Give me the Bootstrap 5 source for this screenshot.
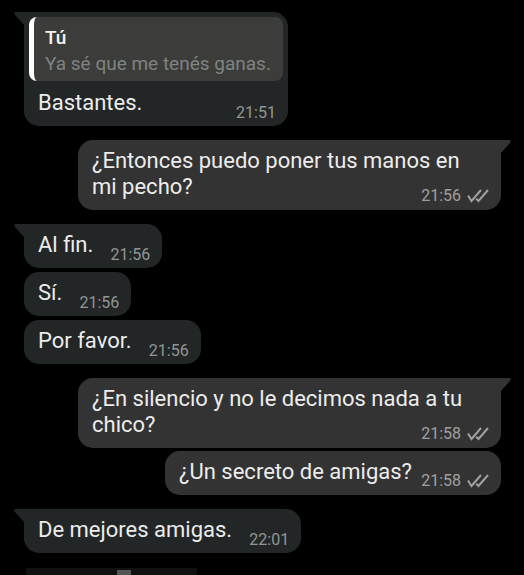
<!DOCTYPE html>
<html lang="es">
<head>
<meta charset="utf-8">
<meta name="viewport" content="width=device-width, initial-scale=1">
<title>Chat</title>
<link href="https://cdn.jsdelivr.net/npm/bootstrap@5.3.0/dist/css/bootstrap.min.css" rel="stylesheet">
<style>
body { background: #000; color: #ececec; font-family: Roboto, "Liberation Sans", sans-serif; font-size: 22px; line-height: 26px; }
.chat { height: 100vh; overflow: hidden; padding: 12px 23px 0 24px; gap: 14px; }
.thread { gap: 4px; }
.sent { gap: 3px; }
.bubble { border-radius: 15px; background: #232626; max-width: 423px; }
.sent .bubble { background: #333; }
.tail::before { content: ""; position: absolute; top: 0; left: -10px; width: 12px; height: 16px; background: inherit; clip-path: path("M2 0H12V16H10V13L1 3Q-1 0 2 0Z"); }
.sent .tail::before { left: auto; right: -10px; transform: scaleX(-1); }
.received .tail { border-top-left-radius: 0; }
.sent .tail { border-top-right-radius: 0; }
.message { padding: 8px 12px 3px 14px; }
.message > * { grid-area: 1 / 1; }
.words { padding: 0 8px 7px 0; }
.room { display: inline-block; width: 49px; }
.sent .room { width: 69px; }
.stamp { font-size: 16px; line-height: 20px; color: #939595; gap: 6px; }
.sent .stamp { color: #a0a0a0; padding-bottom: 1px; }
.quote { margin: 5px 5px 1px; padding: 8px 12px 4px 11px; border-left: 5px solid #fff; border-radius: 8px; background: #3c3c3a; color: #7e8483; font-size: 19px; }
.quote strong { color: #f4f4f4; font-weight: 500; }
.next-item { width: 171px; height: 30px; margin: 1px 0 0 2px; background: #101010; }
.next-item span { width: 14px; height: 6px; margin: 2px 0 0 91px; background: #555; }
</style>
<script src="https://cdn.jsdelivr.net/npm/bootstrap@5.3.0/dist/js/bootstrap.bundle.min.js"></script>
</head>
<body>
<svg class="d-none" aria-hidden="true"><symbol id="checks" viewBox="0 0 22 14"><path d="M1 6.500L4.500 12L14 1M9.200 9.800L11.500 12L21 1" fill="none" stroke="currentColor" stroke-width="2"/></symbol></svg>
<main class="chat d-flex flex-column">
  <section class="thread received d-flex flex-column align-items-start">
    <article class="bubble tail position-relative">
      <div class="quote"><strong class="d-block">Tú</strong><span class="d-block">Ya sé que me tenés ganas.</span></div>
      <div class="message d-grid"><p class="words m-0">Bastantes.<span class="room"></span></p><time class="stamp align-self-end ms-auto">21:51</time></div>
    </article>
  </section>
  <section class="thread sent d-flex flex-column align-items-end">
    <article class="bubble tail position-relative">
      <div class="message d-grid"><p class="words m-0">¿Entonces puedo poner tus manos en mi pecho?<span class="room"></span></p><div class="stamp d-flex align-items-center align-self-end ms-auto"><time>21:56</time><svg width="22" height="14" role="img" aria-label="Entregado"><use href="#checks"/></svg></div></div>
    </article>
  </section>
  <section class="thread received d-flex flex-column align-items-start">
    <article class="bubble tail position-relative">
      <div class="message d-grid"><p class="words m-0">Al fin.<span class="room"></span></p><time class="stamp align-self-end ms-auto">21:56</time></div>
    </article>
    <article class="bubble">
      <div class="message d-grid"><p class="words m-0">Sí.<span class="room"></span></p><time class="stamp align-self-end ms-auto">21:56</time></div>
    </article>
    <article class="bubble">
      <div class="message d-grid"><p class="words m-0">Por favor.<span class="room"></span></p><time class="stamp align-self-end ms-auto">21:56</time></div>
    </article>
  </section>
  <section class="thread sent d-flex flex-column align-items-end">
    <article class="bubble tail position-relative">
      <div class="message d-grid"><p class="words m-0">¿En silencio y no le decimos nada a tu chico?<span class="room"></span></p><div class="stamp d-flex align-items-center align-self-end ms-auto"><time>21:58</time><svg width="22" height="14" role="img" aria-label="Entregado"><use href="#checks"/></svg></div></div>
    </article>
    <article class="bubble">
      <div class="message d-grid"><p class="words m-0">¿Un secreto de amigas?<span class="room"></span></p><div class="stamp d-flex align-items-center align-self-end ms-auto"><time>21:58</time><svg width="22" height="14" role="img" aria-label="Entregado"><use href="#checks"/></svg></div></div>
    </article>
  </section>
  <section class="thread received d-flex flex-column align-items-start">
    <article class="bubble tail position-relative">
      <div class="message d-grid"><p class="words m-0">De mejores amigas.<span class="room"></span></p><time class="stamp align-self-end ms-auto">22:01</time></div>
    </article>
  </section>
  <div class="next-item flex-shrink-0 d-flex"><span></span></div>
</main>
</body>
</html>
